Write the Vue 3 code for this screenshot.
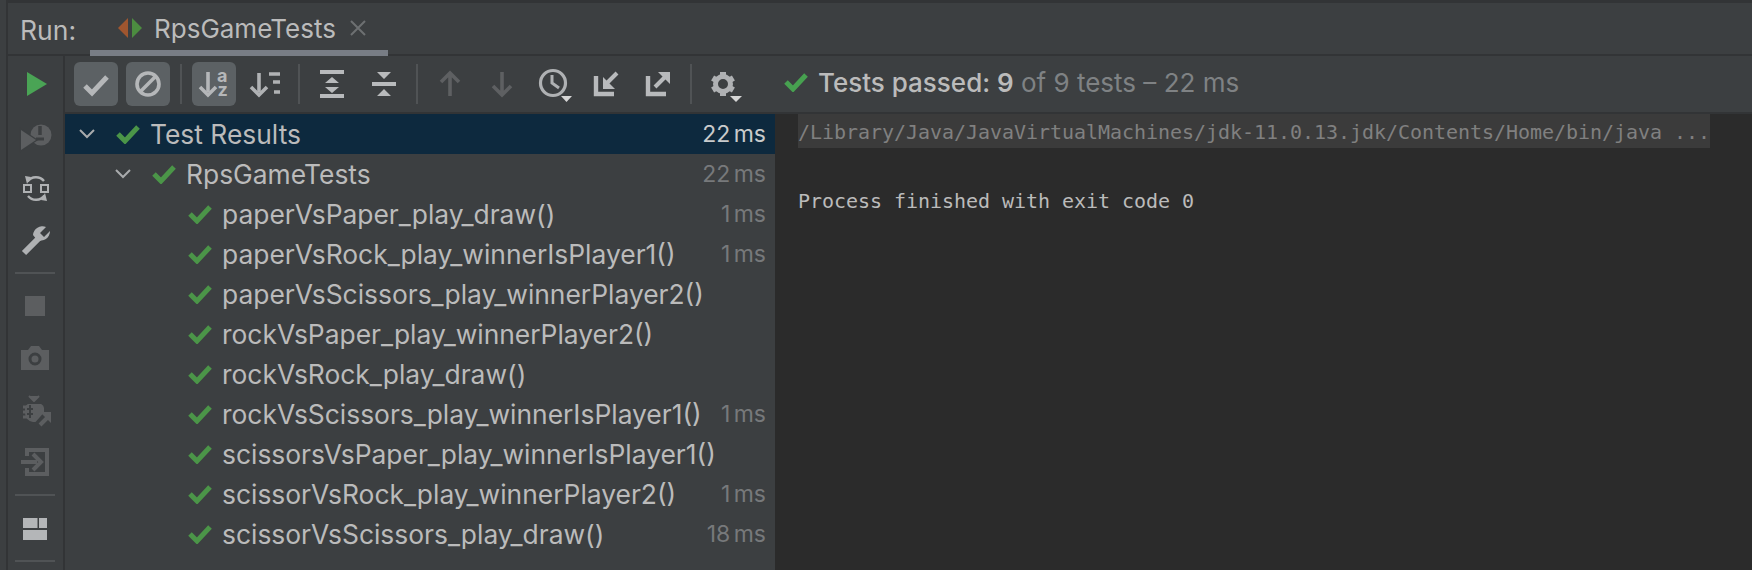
<script setup>
const rows = [
  { name: 'paperVsPaper_play_draw()', time: '1 ms' },
  { name: 'paperVsRock_play_winnerIsPlayer1()', time: '1 ms' },
  { name: 'paperVsScissors_play_winnerPlayer2()', time: '' },
  { name: 'rockVsPaper_play_winnerPlayer2()', time: '' },
  { name: 'rockVsRock_play_draw()', time: '' },
  { name: 'rockVsScissors_play_winnerIsPlayer1()', time: '1 ms' },
  { name: 'scissorsVsPaper_play_winnerIsPlayer1()', time: '' },
  { name: 'scissorVsRock_play_winnerPlayer2()', time: '1 ms' },
  { name: 'scissorVsScissors_play_draw()', time: '18 ms' }
]
</script>

<template>
  <div class="root">
    <div class="strip"></div>
    <div class="main">
      <header class="tabbar">
        <span class="run-label">Run:</span>
        <div class="tab">
          <svg class="tab-icon" width="26" height="22" viewBox="0 0 26 22">
            <path d="M11 1 L1 11 L11 21 Z" fill="#a0562f" />
            <path d="M15 1 L25 11 L15 21 Z" fill="#4c8c40" />
          </svg>
          <span class="tab-name">RpsGameTests</span>
          <svg class="tab-close" width="16" height="16" viewBox="0 0 16 16">
            <path d="M1 1 L15 15 M15 1 L1 15" stroke="#6d7072" stroke-width="2" fill="none" />
          </svg>
        </div>
      </header>

      <div class="body">
        <aside class="side">
          <svg class="ic" viewBox="0 0 44 44"><path d="M14 10 L34 22 L14 34 Z" fill="#4aa455" /></svg>
          <svg class="ic" viewBox="0 0 44 44">
            <circle cx="28" cy="21" r="10.5" fill="#5c5e60" />
            <path d="M8 16 L23 26 L8 36 Z" fill="#5c5e60" stroke="#3c3f41" stroke-width="2.5" paint-order="stroke" />
            <path d="M27 12 V21" stroke="#3c3f41" stroke-width="3.5" />
            <path d="M23 25 H31" stroke="#3c3f41" stroke-width="3" />
          </svg>
          <svg class="ic" viewBox="0 0 44 44">
            <rect x="11" y="19" width="7" height="7" fill="none" stroke="#afb1b3" stroke-width="2" />
            <rect x="28" y="19" width="7" height="7" fill="none" stroke="#afb1b3" stroke-width="2" />
            <path d="M14.5 15.5 A10.5 10.5 0 0 1 31 15" fill="none" stroke="#afb1b3" stroke-width="2.4" />
            <path d="M12 10 L18 11 L14 18 Z" fill="#afb1b3" />
            <path d="M31.5 29.5 A10.5 10.5 0 0 1 15 30" fill="none" stroke="#afb1b3" stroke-width="2.4" />
            <path d="M34 35 L28 34 L32 27 Z" fill="#afb1b3" />
          </svg>
          <svg class="ic" viewBox="0 0 44 44">
            <path d="M11 35 L26 20" stroke="#afb1b3" stroke-width="6" fill="none" />
            <path d="M33 9 L27 15 L31 19 L37 13 A9.5 9.5 0 0 1 24 22 L20 17 A9.5 9.5 0 0 1 33 9 Z" fill="#afb1b3" />
          </svg>
          <div class="hsep"></div>
          <svg class="ic" viewBox="0 0 44 44"><rect x="12" y="12" width="20" height="20" fill="#5c5e60" /></svg>
          <svg class="ic" viewBox="0 0 44 44">
            <path d="M8 14 H15 L18 10 H26 L29 14 H36 V34 H8 Z" fill="#5c5e60" />
            <circle cx="22" cy="23" r="5" fill="none" stroke="#3c3f41" stroke-width="3" />
          </svg>
          <svg class="ic" viewBox="0 0 44 44">
            <path d="M16 8 L21 13 L26 8 M15 17 H28 A4 4 0 0 1 30 20 V24 L22 33 H20 A8 8 0 0 1 13 25 V20 A4 4 0 0 1 15 17 Z" fill="#5c5e60" stroke="#5c5e60" stroke-width="2" stroke-linejoin="round" />
            <path d="M10 19 H16 M10 24 H16 M10 29 H16" stroke="#5c5e60" stroke-width="3" />
            <path d="M17 17 V30 M20 21 H14 M20 26 H14" stroke="#3c3f41" stroke-width="2" fill="none" />
            <path d="M27 37 L36 28" stroke="#5c5e60" stroke-width="4" />
            <path d="M27 24 H38 V35 Z" fill="#5c5e60" />
          </svg>
          <svg class="ic" viewBox="0 0 44 44">
            <path d="M14 16 V10 H34 V34 H14 V28" fill="none" stroke="#5c5e60" stroke-width="4" />
            <path d="M8 22 H24" stroke="#5c5e60" stroke-width="4" />
            <path d="M20 14 L28 22 L20 30" fill="none" stroke="#5c5e60" stroke-width="4" />
          </svg>
          <div class="hsep"></div>
          <svg class="ic" viewBox="0 0 44 44">
            <rect x="10" y="12" width="14.5" height="10" fill="#b4b6b8" />
            <rect x="26" y="12" width="8" height="10" fill="#b4b6b8" />
            <rect x="10" y="24" width="24" height="10" fill="#b4b6b8" />
          </svg>
          <div class="hsep"></div>
        </aside>

        <div class="content">
          <div class="toolbar">
            <div class="btn on">
              <svg class="ic" viewBox="0 0 44 44"><path d="M11 24 L18 31 L33 15" fill="none" stroke="#b5b7b9" stroke-width="5" /></svg>
            </div>
            <div class="btn on">
              <svg class="ic" viewBox="0 0 44 44">
                <circle cx="22" cy="22" r="11" fill="none" stroke="#b5b7b9" stroke-width="3.6" />
                <path d="M14 30 L30 14" stroke="#b5b7b9" stroke-width="3.6" />
              </svg>
            </div>
            <div class="vsep"></div>
            <div class="btn on">
              <svg class="ic" viewBox="0 0 44 44">
                <path d="M16 10 V30" stroke="#b5b7b9" stroke-width="3.6" />
                <path d="M8 25 L16 33 L24 25" fill="none" stroke="#b5b7b9" stroke-width="3.6" />
                <text x="25" y="20" class="az">a</text>
                <text x="25.5" y="34" class="az">z</text>
              </svg>
            </div>
            <svg class="ic" viewBox="0 0 44 44">
              <path d="M15 11 V30" stroke="#b0b2b4" stroke-width="3.6" />
              <path d="M7 25 L15 33 L23 25" fill="none" stroke="#b0b2b4" stroke-width="3.6" />
              <path d="M25 12 H36 M29 20 H36 M30 30 H36" stroke="#b0b2b4" stroke-width="3.6" />
            </svg>
            <div class="vsep"></div>
            <svg class="ic" viewBox="0 0 44 44">
              <path d="M10 10 H34 M10 34 H34" stroke="#b8babc" stroke-width="4" />
              <path d="M22 15 L29 21 H15 Z M22 31 L15 25 H29 Z" fill="#b8babc" />
            </svg>
            <svg class="ic" viewBox="0 0 44 44">
              <path d="M10 22 H34" stroke="#b8babc" stroke-width="4" />
              <path d="M15 10 H29 L22 17 Z M15 34 H29 L22 27 Z" fill="#b8babc" />
            </svg>
            <div class="vsep"></div>
            <svg class="ic" viewBox="0 0 44 44">
              <path d="M22 34 V12 M13 20 L22 11 L31 20" fill="none" stroke="#5e6062" stroke-width="3.6" />
            </svg>
            <svg class="ic" viewBox="0 0 44 44">
              <path d="M22 10 V32 M13 24 L22 33 L31 24" fill="none" stroke="#5e6062" stroke-width="3.6" />
            </svg>
            <svg class="ic" viewBox="0 0 44 44">
              <circle cx="21" cy="21" r="12.5" fill="none" stroke="#afb1b3" stroke-width="3.2" />
              <path d="M20 13 V21 L27 26" fill="none" stroke="#afb1b3" stroke-width="3" />
              <path d="M29 34 H40 L34.5 40 Z" fill="#d6d6d6" />
            </svg>
            <svg class="ic" viewBox="0 0 44 44">
              <path d="M12 14 V32 H30" fill="none" stroke="#b8babc" stroke-width="4.4" />
              <path d="M33 11 L21 23" stroke="#b8babc" stroke-width="4" />
              <path d="M19 15 V27 H31 Z" fill="#b8babc" />
            </svg>
            <svg class="ic" viewBox="0 0 44 44">
              <path d="M12 14 V32 H30" fill="none" stroke="#b8babc" stroke-width="4.4" />
              <path d="M19 25 L31 13" stroke="#b8babc" stroke-width="4" />
              <path d="M22 10 H34 V22 Z" fill="#b8babc" />
            </svg>
            <div class="vsep"></div>
            <svg class="ic" viewBox="0 0 44 44">
              <path d="M21 10 V34 M10.6 16 L31.4 28 M10.6 28 L31.4 16" stroke="#afb1b3" stroke-width="6" />
              <circle cx="21" cy="22" r="7.5" fill="#3c3f41" stroke="#afb1b3" stroke-width="5" />
              <path d="M28 34 H40 L34 40 Z" fill="#d6d6d6" />
            </svg>
            <div class="status">
              <svg width="24" height="20" viewBox="0 0 24 20"><path d="M2 10 L9 17 L22 3" fill="none" stroke="#47a150" stroke-width="5" /></svg>
              <span class="status-text"><span class="st-main">Tests passed: <b>9</b></span><span class="st-dim"> of 9 tests – 22 ms</span></span>
            </div>
          </div>

          <div class="panes">
            <div class="tree">
              <div class="row level0 selected">
                <svg class="chev" width="16" height="10" viewBox="0 0 16 10"><path d="M1 1 L8 8 L15 1" fill="none" stroke="#a9abad" stroke-width="2" /></svg>
                <svg class="chk" width="24" height="20" viewBox="0 0 24 20"><path d="M2 10 L9 17 L22 3" fill="none" stroke="#4b9548" stroke-width="5" /></svg>
                <span class="name">Test Results</span>
                <span class="time">22 ms</span>
              </div>
              <div class="row level1">
                <svg class="chev" width="16" height="10" viewBox="0 0 16 10"><path d="M1 1 L8 8 L15 1" fill="none" stroke="#a9abad" stroke-width="2" /></svg>
                <svg class="chk" width="24" height="20" viewBox="0 0 24 20"><path d="M2 10 L9 17 L22 3" fill="none" stroke="#4b9548" stroke-width="5" /></svg>
                <span class="name">RpsGameTests</span>
                <span class="time">22 ms</span>
              </div>
              <div v-for="r in rows" :key="r.name" class="row level2">
                <svg class="chk" width="24" height="20" viewBox="0 0 24 20"><path d="M2 10 L9 17 L22 3" fill="none" stroke="#4b9548" stroke-width="5" /></svg>
                <span class="name">{{ r.name }}</span>
                <span class="time">{{ r.time }}</span>
              </div>
            </div>
            <div class="console">
              <div class="line cmd">/Library/Java/JavaVirtualMachines/jdk-11.0.13.jdk/Contents/Home/bin/java ...</div>
              <div class="line"></div>
              <div class="line">Process finished with exit code 0</div>
            </div>
          </div>
        </div>
      </div>
    </div>
  </div>
</template>

<style scoped>
.root {
  width: 1752px;
  height: 570px;
  display: flex;
  overflow: hidden;
  background: #3c3f41;
  font-family: Inter, "Noto Sans", sans-serif;
  color: #bbbbbb;
}
.strip {
  width: 6px;
  flex: none;
  border-right: 2px solid #323436;
  box-sizing: content-box;
}
.main {
  flex: 1;
  min-width: 0;
  display: flex;
  flex-direction: column;
}
.tabbar {
  height: 54px;
  flex: none;
  box-sizing: border-box;
  border-top: 3px solid #323436;
  display: flex;
  align-items: flex-end;
  padding-left: 12px;
  position: relative;
}
.run-label {
  width: 70px;
  font-size: 26.5px;
  line-height: 30px;
  align-self: flex-start;
  margin-top: 12px;
}
.tab {
  width: 298px;
  height: 50px;
  box-sizing: border-box;
  border-bottom: 6px solid #787d85;
  display: flex;
  align-items: center;
  padding-left: 27px;
  margin-bottom: -2px;
  position: relative;
  z-index: 1;
}
.tab-icon { flex: none; }
.tab-name {
  font-size: 26px;
  margin-left: 11px;
  white-space: nowrap;
}
.tab-close {
  flex: none;
  margin-left: 14px;
}
.body {
  flex: 1;
  min-height: 0;
  display: flex;
  border-top: 2px solid #323436;
}
.side {
  width: 57px;
  flex: none;
  box-sizing: border-box;
  border-right: 2px solid #323436;
  padding: 6px 1px 0 0;
  display: flex;
  flex-direction: column;
  align-items: center;
  gap: 8px;
}
.ic {
  width: 44px;
  height: 44px;
  flex: none;
  display: block;
}
.hsep {
  width: 40px;
  height: 2px;
  flex: none;
  margin: 2px 0;
  background: #505355;
}
.content {
  flex: 1;
  min-width: 0;
  display: flex;
  flex-direction: column;
}
.toolbar {
  height: 58px;
  flex: none;
  box-sizing: border-box;
  border-bottom: 2px solid #323436;
  padding: 6px 0 0 9px;
  display: flex;
  align-items: flex-start;
  gap: 8px;
}
.btn {
  width: 44px;
  height: 44px;
  flex: none;
  border-radius: 6px;
  background: #5c6164;
}
.vsep {
  width: 6px;
  height: 40px;
  flex: none;
  margin-top: 2px;
  display: flex;
  justify-content: center;
}
.vsep::before {
  content: "";
  width: 2px;
  background: #505355;
}
.az {
  font-family: Inter, sans-serif;
  font-weight: 700;
  font-size: 18px;
  fill: #b5b7b9;
}
.status {
  display: flex;
  align-items: center;
  height: 40px;
  margin-left: 30px;
  gap: 10px;
}
.status-text {
  font-size: 26px;
  white-space: nowrap;
}
.st-main { font-weight: 500; }
.st-main b { font-weight: 600; }
.st-dim { color: #7f8284; }
.panes {
  flex: 1;
  min-height: 0;
  display: flex;
}
.tree {
  width: 710px;
  flex: none;
}
.row {
  height: 40px;
  display: flex;
  align-items: center;
  box-sizing: border-box;
  padding-right: 9px;
  white-space: nowrap;
}
.row.selected {
  background: #0d293e;
}
.level0 { padding-left: 14px; }
.level1 { padding-left: 50px; }
.level2 { padding-left: 123px; }
.chev {
  flex: none;
  margin-right: 21px;
}
.chk {
  flex: none;
  margin-right: 10px;
}
.name {
  flex: 1;
  font-size: 26.4px;
  min-width: 0;
}
.time {
  font-size: 23px;
  word-spacing: -3px;
  color: #77797b;
}
.selected .time {
  color: #c9cbcc;
}
.console {
  flex: 1;
  min-width: 0;
  background: #2b2b2b;
  padding-left: 23px;
  font-family: "DejaVu Sans Mono", "Liberation Mono", monospace;
  font-size: 20px;
  letter-spacing: -0.04px;
}
.line {
  height: 34px;
  line-height: 38px;
  white-space: pre;
}
.line.cmd {
  width: 912px;
  line-height: 36px;
  background: #3b3b3b;
  color: #808080;
}
</style>

<style>
html, body { margin: 0; background: #3c3f41; }
</style>
